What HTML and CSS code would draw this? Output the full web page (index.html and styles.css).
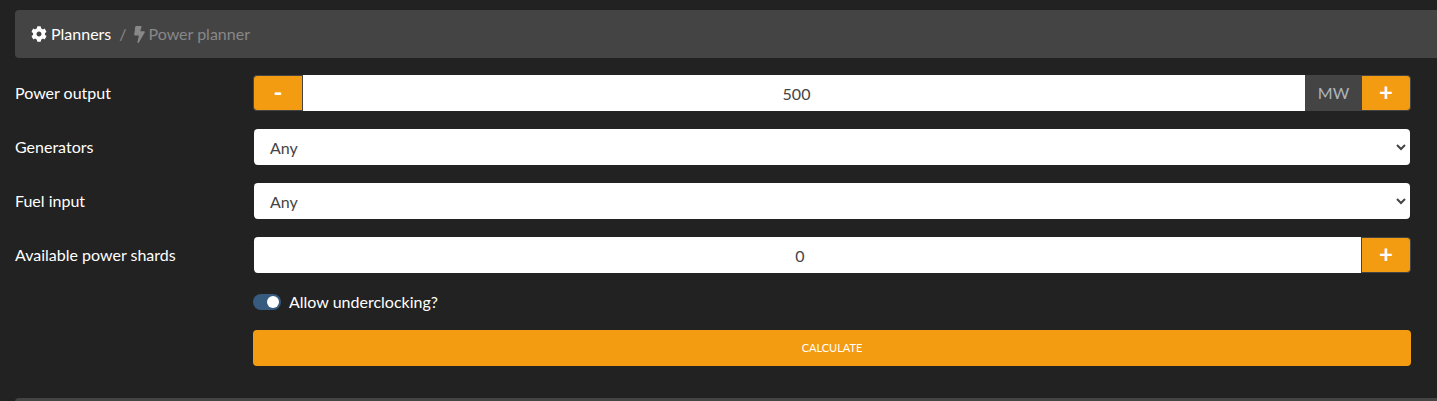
FILE: index.html
```html
<!DOCTYPE html>
<html lang="en">
<head>
    <meta charset="UTF-8">
    <meta name="viewport" content="width=device-width, initial-scale=1.0">
    <title>Power planner</title>
    <link rel="stylesheet" href="styles.css">
</head>
<body>
    <nav class="breadcrumb">
        <span class="crumb">
            <svg class="icon-gear" viewBox="0 0 512 512"><path fill="currentColor" d="M487.4 315.7l-42.6-24.6c4.3-23.2 4.3-47 0-70.2l42.6-24.6c4.9-2.8 7.1-8.6 5.5-14-11.100-35.600-30-67.800-54.700-94.600-3.800-4.100-10-5.100-14.800-2.300L380.800 110c-17.900-15.400-38.500-27.300-60.800-35.100V25.800c0-5.600-3.900-10.500-9.400-11.700-36.700-8.200-74.300-7.800-109.200 0-5.500 1.200-9.400 6.100-9.400 11.700V75c-22.200 7.900-42.800 19.800-60.800 35.100L88.700 85.500c-4.900-2.800-11-1.900-14.800 2.300-24.700 26.700-43.600 58.900-54.700 94.600-1.700 5.400.6 11.200 5.500 14L67.300 221c-4.300 23.200-4.300 47 0 70.200l-42.600 24.600c-4.900 2.800-7.100 8.600-5.500 14 11.100 35.600 30 67.800 54.700 94.600 3.800 4.100 10 5.100 14.800 2.300l42.600-24.600c17.900 15.400 38.500 27.300 60.800 35.100v49.200c0 5.600 3.900 10.500 9.400 11.700 36.700 8.200 74.300 7.800 109.200 0 5.500-1.200 9.400-6.100 9.400-11.700v-49.200c22.200-7.900 42.800-19.800 60.800-35.100l42.600 24.600c4.900 2.800 11 1.900 14.800-2.300 24.700-26.700 43.600-58.900 54.700-94.600 1.500-5.500-.7-11.300-5.600-14.100zM256 336c-44.100 0-80-35.900-80-80s35.900-80 80-80 80 35.900 80 80-35.900 80-80 80z"/></svg>
            <span class="text">Planners</span>
        </span>
        <span class="divider text">/</span>
        <span class="crumb active">
            <svg class="icon-bolt" viewBox="0 0 320 512"><path fill="currentColor" d="M296 160H180.600l42.600-129.800C227.200 15 215.700 0 200 0H56C44 0 33.800 8.900 32.200 20.800l-32 240C-1.700 275.200 9.500 288 24 288h118.700L96.600 482.500c-3.600 15.200 8 29.500 23.300 29.500 8.400 0 16.400-4.400 20.800-12l176-304c9.300-15.900-2.200-36-20.700-36z"/></svg>
            <span class="text">Power planner</span>
        </span>
    </nav>

    <form class="planner">
        <div class="row">
            <label class="row-label">Power output</label>
            <div class="input-group">
                <button type="button" class="btn btn-left">-</button>
                <input class="field" type="text" value="500">
                <span class="addon">MW</span>
                <button type="button" class="btn btn-right">+</button>
            </div>
        </div>
        <div class="row">
            <label class="row-label">Generators</label>
            <select class="choice"><option>Any</option></select>
        </div>
        <div class="row">
            <label class="row-label">Fuel input</label>
            <select class="choice"><option>Any</option></select>
        </div>
        <div class="row">
            <label class="row-label">Available power shards</label>
            <div class="input-group">
                <input class="field field-start" type="text" value="0">
                <button type="button" class="btn btn-right">+</button>
            </div>
        </div>
        <div class="row row-switch">
            <span class="row-label"></span>
            <label class="switch"><span class="switch-track"><span class="switch-thumb"></span></span><span class="text">Allow underclocking?</span></label>
        </div>
        <div class="row row-submit">
            <span class="row-label"></span>
            <button type="button" class="calculate">CALCULATE</button>
        </div>
    </form>

    <div class="next-card"></div>
</body>
</html>
```

FILE: styles.css
```css
html, body {
    height: 100%;
}
body {
    font-family: Lato, "Liberation Sans", sans-serif;
    font-size: 16px;
    color: #fff;
    background-color: #222;
    margin: 0;
    padding: 10px 26px 0 15px;
    box-sizing: border-box;
    overflow: hidden;
}
.text {
    margin-bottom: 2px;
}
.breadcrumb {
    display: flex;
    align-items: center;
    height: 48px;
    margin-right: -40px;
    padding: 0 16px;
    background-color: #444;
    border-radius: 4px;
}
.crumb {
    display: flex;
    align-items: center;
    gap: 4px;
}
.crumb.active {
    color: #888;
}
.divider {
    color: #888;
    margin-left: 8px;
    margin-right: 7px;
}
.icon-gear {
    width: 16px;
    height: 16px;
}
.icon-bolt {
    width: 11px;
    height: 17px;
}
.planner {
    margin-top: 17px;
}
.row {
    display: flex;
    align-items: center;
    height: 36px;
    margin-bottom: 18px;
}
.row-label {
    flex: 0 0 238px;
    padding-bottom: 2px;
}
.input-group {
    flex: 1;
    display: flex;
    height: 36px;
}
.btn {
    width: 50px;
    padding: 0 0 3px;
    font-family: inherit;
    font-size: 24px;
    font-weight: 700;
    color: #fff;
    background-color: #f39c12;
    border: 1px solid #444;
}
.btn-left {
    border-radius: 4px 0 0 4px;
}
.btn-right {
    border-radius: 0 4px 4px 0;
}
.field {
    flex: 1;
    min-width: 0;
    padding: 0 15px 0 0;
    font-family: inherit;
    font-size: 16px;
    text-align: center;
    color: #444;
    background-color: #fff;
    border: none;
}
.field-start {
    margin-left: 1px;
    border-radius: 4px 0 0 4px;
}
.addon {
    display: flex;
    align-items: center;
    justify-content: center;
    width: 56px;
    padding: 0 0 2px 1px;
    box-sizing: border-box;
    color: #adb5bd;
    background-color: #444;
}
.choice {
    flex: 1;
    height: 36px;
    margin: 0 1px;
    padding: 0 16px;
    font-family: inherit;
    font-size: 16px;
    color: #444;
    background-color: #fff;
    background-image: url("data:image/svg+xml,%3Csvg xmlns='http://www.w3.org/2000/svg' viewBox='0 0 10 7'%3E%3Cpath fill='none' stroke='%23444' stroke-width='2' d='M1 1l4 4 4-4'/%3E%3C/svg%3E");
    background-repeat: no-repeat;
    background-position: right 4px center;
    background-size: 10px 7px;
    border: none;
    border-radius: 4px;
    appearance: none;
}
.row-switch {
    height: 20px;
    margin-top: 19px;
    margin-bottom: 18px;
}
.switch {
    display: flex;
    align-items: center;
    gap: 8px;
}
.switch-track {
    display: flex;
    justify-content: flex-end;
    align-items: center;
    width: 28px;
    height: 16px;
    padding: 0 2px;
    box-sizing: border-box;
    background-color: #375a7f;
    border-radius: 8px;
}
.switch-thumb {
    width: 12px;
    height: 12px;
    background-color: #fff;
    border-radius: 50%;
}
.calculate {
    flex: 1;
    height: 36px;
    padding: 0 0 2px;
    font-family: inherit;
    font-size: 11px;
    color: #fff;
    background-color: #f39c12;
    border: none;
    border-radius: 4px;
}
.next-card {
    height: 10px;
    margin-right: -40px;
    margin-top: 32px;
    background-color: #444;
    border-radius: 4px 4px 0 0;
}
```
